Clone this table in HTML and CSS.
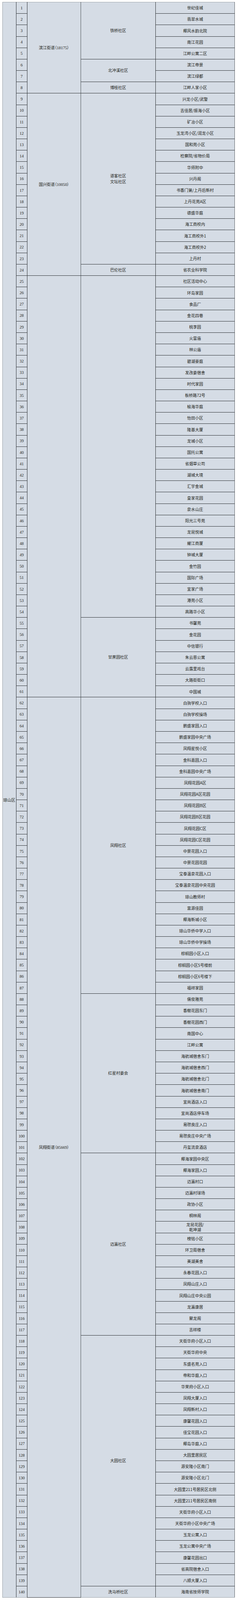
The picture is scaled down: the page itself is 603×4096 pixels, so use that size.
FILE: index.html
```html
<!DOCTYPE html>
<html lang="zh-CN">
<head>
<meta charset="utf-8">
<title>琼山区 点位表</title>
<link rel="stylesheet" href="styles.css">
</head>
<body>
<table class="sheet">
<colgroup>
<col class="c-dist"><col class="c-num"><col class="c-street"><col class="c-comm"><col class="c-loc">
</colgroup>
<tbody>
<tr class="first"><td class="dist" rowspan="140">琼山区</td><td class="num">1</td><td class="street" rowspan="8">滨江街道（<span class="n">18175</span>）</td><td class="comm" rowspan="5">铁桥社区</td><td class="loc">世纪佳城</td></tr>
<tr><td class="num">2</td><td class="loc">翡翠水城</td></tr>
<tr><td class="num">3</td><td class="loc">椰风水韵北院</td></tr>
<tr><td class="num">4</td><td class="loc">南江花园</td></tr>
<tr><td class="num">5</td><td class="loc">江畔公寓二区</td></tr>
<tr><td class="num">6</td><td class="comm" rowspan="2">北冲溪社区</td><td class="loc">滨江帝景</td></tr>
<tr><td class="num">7</td><td class="loc">滨江绿都</td></tr>
<tr><td class="num">8</td><td class="comm">博桂社区</td><td class="loc">江畔人家小区</td></tr>
<tr><td class="num">9</td><td class="street" rowspan="16">国兴街道（<span class="n">10050</span>）</td><td class="comm" rowspan="15">道客社区<br>文坛社区</td><td class="loc">兴龙小区/武警</td></tr>
<tr><td class="num">10</td><td class="loc">吉佳居/振海小区</td></tr>
<tr><td class="num">11</td><td class="loc">矿冶小区</td></tr>
<tr><td class="num">12</td><td class="loc">玉龙湾小区/润龙小区</td></tr>
<tr><td class="num">13</td><td class="loc">国和苑小区</td></tr>
<tr><td class="num">14</td><td class="loc">检察院/省物价局</td></tr>
<tr><td class="num">15</td><td class="loc">华师附中</td></tr>
<tr><td class="num">16</td><td class="loc">兴丹阁</td></tr>
<tr><td class="num">17</td><td class="loc">书香门第/上丹后新村</td></tr>
<tr><td class="num">18</td><td class="loc">上丹花苑A区</td></tr>
<tr><td class="num">19</td><td class="loc">德盛华庭</td></tr>
<tr><td class="num">20</td><td class="loc">海工商校内</td></tr>
<tr><td class="num">21</td><td class="loc">海工商校外1</td></tr>
<tr><td class="num">22</td><td class="loc">海工商校外2</td></tr>
<tr><td class="num">23</td><td class="loc">上丹村</td></tr>
<tr><td class="num">24</td><td class="comm">巴伦社区</td><td class="loc">省农业科学院</td></tr>
<tr><td class="num">25</td><td class="street" rowspan="37"></td><td class="comm" rowspan="30"></td><td class="loc">社区活动中心</td></tr>
<tr><td class="num">26</td><td class="loc">环岛家园</td></tr>
<tr><td class="num">27</td><td class="loc">食品厂</td></tr>
<tr><td class="num">28</td><td class="loc">金花四巷</td></tr>
<tr><td class="num">29</td><td class="loc">桃李园</td></tr>
<tr><td class="num">30</td><td class="loc">火雷庙</td></tr>
<tr><td class="num">31</td><td class="loc">林公庙</td></tr>
<tr><td class="num">32</td><td class="loc">碧湖豪庭</td></tr>
<tr><td class="num">33</td><td class="loc">发改委宿舍</td></tr>
<tr><td class="num">34</td><td class="loc">时代家园</td></tr>
<tr><td class="num">35</td><td class="loc">板桥路72号</td></tr>
<tr><td class="num">36</td><td class="loc">榆海华庭</td></tr>
<tr><td class="num">37</td><td class="loc">怡田小区</td></tr>
<tr><td class="num">38</td><td class="loc">隆基大厦</td></tr>
<tr><td class="num">39</td><td class="loc">龙城小区</td></tr>
<tr><td class="num">40</td><td class="loc">国托公寓</td></tr>
<tr><td class="num">41</td><td class="loc">省烟草公司</td></tr>
<tr><td class="num">42</td><td class="loc">湖城大境</td></tr>
<tr><td class="num">43</td><td class="loc">汇宇金城</td></tr>
<tr><td class="num">44</td><td class="loc">皇家花园</td></tr>
<tr><td class="num">45</td><td class="loc">泉水山庄</td></tr>
<tr><td class="num">46</td><td class="loc">阳光三号苑</td></tr>
<tr><td class="num">47</td><td class="loc">龙昆悦城</td></tr>
<tr><td class="num">48</td><td class="loc">耀江商厦</td></tr>
<tr><td class="num">49</td><td class="loc">钟城大厦</td></tr>
<tr><td class="num">50</td><td class="loc">金竹园</td></tr>
<tr><td class="num">51</td><td class="loc">国际广场</td></tr>
<tr><td class="num">52</td><td class="loc">宜家广场</td></tr>
<tr><td class="num">53</td><td class="loc">港苑小区</td></tr>
<tr><td class="num">54</td><td class="loc">高路华小区</td></tr>
<tr><td class="num">55</td><td class="comm" rowspan="7">甘蔗园社区</td><td class="loc">书馨苑</td></tr>
<tr><td class="num">56</td><td class="loc">金花园</td></tr>
<tr><td class="num">57</td><td class="loc">中信银行</td></tr>
<tr><td class="num">58</td><td class="loc">朱云恩公寓</td></tr>
<tr><td class="num">59</td><td class="loc">云露里戏台</td></tr>
<tr><td class="num">60</td><td class="loc">大路街街口</td></tr>
<tr><td class="num">61</td><td class="loc">中国城</td></tr>
<tr><td class="num">62</td><td class="street" rowspan="79">凤翔街道（<span class="n">85669</span>）</td><td class="comm" rowspan="26">凤翔社区</td><td class="loc">白驹学校入口</td></tr>
<tr><td class="num">63</td><td class="loc">白驹学校操场</td></tr>
<tr><td class="num">64</td><td class="loc">鹏盛家园入口</td></tr>
<tr><td class="num">65</td><td class="loc">鹏盛家园中央广场</td></tr>
<tr><td class="num">66</td><td class="loc">凤翔星悦小区</td></tr>
<tr><td class="num">67</td><td class="loc">金科嘉园入口</td></tr>
<tr><td class="num">68</td><td class="loc">金科嘉园中央广场</td></tr>
<tr><td class="num">69</td><td class="loc">凤翔花园A区</td></tr>
<tr><td class="num">70</td><td class="loc">凤翔花园A区花园</td></tr>
<tr><td class="num">71</td><td class="loc">凤翔花园B区</td></tr>
<tr><td class="num">72</td><td class="loc">凤翔花园B区花园</td></tr>
<tr><td class="num">73</td><td class="loc">凤翔花园C区</td></tr>
<tr><td class="num">74</td><td class="loc">凤翔花园C区花园</td></tr>
<tr><td class="num">75</td><td class="loc">中景花园入口</td></tr>
<tr><td class="num">76</td><td class="loc">中景花园花园</td></tr>
<tr><td class="num">77</td><td class="loc">宝泰温泉花园入口</td></tr>
<tr><td class="num">78</td><td class="loc">宝泰温泉花园中央花园</td></tr>
<tr><td class="num">79</td><td class="loc">琼山教师村</td></tr>
<tr><td class="num">80</td><td class="loc">富源佳园</td></tr>
<tr><td class="num">81</td><td class="loc">椰海新城小区</td></tr>
<tr><td class="num">82</td><td class="loc">琼山华侨中学入口</td></tr>
<tr><td class="num">83</td><td class="loc">琼山华侨中学操场</td></tr>
<tr><td class="num">84</td><td class="loc">棕榈园小区入口</td></tr>
<tr><td class="num">85</td><td class="loc">棕榈园小区5号楼前</td></tr>
<tr><td class="num">86</td><td class="loc">棕榈园小区6号楼下</td></tr>
<tr><td class="num">87</td><td class="loc">福祥家园</td></tr>
<tr><td class="num">88</td><td class="comm" rowspan="14">红星村委会</td><td class="loc">儒俊雅苑</td></tr>
<tr><td class="num">89</td><td class="loc">香榭花园东门</td></tr>
<tr><td class="num">90</td><td class="loc">香榭花园西门</td></tr>
<tr><td class="num">91</td><td class="loc">南国中心</td></tr>
<tr><td class="num">92</td><td class="loc">江畔公寓</td></tr>
<tr><td class="num">93</td><td class="loc">海航城宿舍东门</td></tr>
<tr><td class="num">94</td><td class="loc">海航城宿舍西门</td></tr>
<tr><td class="num">95</td><td class="loc">海航城宿舍北门</td></tr>
<tr><td class="num">96</td><td class="loc">海航城宿舍南门</td></tr>
<tr><td class="num">97</td><td class="loc">宜尚酒店入口</td></tr>
<tr><td class="num">98</td><td class="loc">宜尚酒店停车场</td></tr>
<tr><td class="num">99</td><td class="loc">易瓒良庄入口</td></tr>
<tr><td class="num">100</td><td class="loc">易瓒良庄中央广场</td></tr>
<tr><td class="num">101</td><td class="loc">丹玺流泉酒店</td></tr>
<tr><td class="num">102</td><td class="comm" rowspan="16">迈瀛社区</td><td class="loc">椰海家园中央区</td></tr>
<tr><td class="num">103</td><td class="loc">椰海家园入口</td></tr>
<tr><td class="num">104</td><td class="loc">迈瀛村口</td></tr>
<tr><td class="num">105</td><td class="loc">迈瀛村球场</td></tr>
<tr><td class="num">106</td><td class="loc">政协小区</td></tr>
<tr><td class="num">107</td><td class="loc">桐林阁</td></tr>
<tr><td class="num">108</td><td class="loc">龙昆花园/<br>乾坤湖</td></tr>
<tr><td class="num">109</td><td class="loc">榜铭小区</td></tr>
<tr><td class="num">110</td><td class="loc">环卫局宿舍</td></tr>
<tr><td class="num">111</td><td class="loc">美湖美舍</td></tr>
<tr><td class="num">112</td><td class="loc">永春花园入口</td></tr>
<tr><td class="num">113</td><td class="loc">凤翔山庄入口</td></tr>
<tr><td class="num">114</td><td class="loc">凤翔山庄中央公园</td></tr>
<tr><td class="num">115</td><td class="loc">龙瀛康居</td></tr>
<tr><td class="num">116</td><td class="loc">聚龙阁</td></tr>
<tr><td class="num">117</td><td class="loc">吉祥楼</td></tr>
<tr><td class="num">118</td><td class="comm" rowspan="22">大园社区</td><td class="loc">天街华府小区入口</td></tr>
<tr><td class="num">119</td><td class="loc">天街华府中央</td></tr>
<tr><td class="num">120</td><td class="loc">东盛名苑入口</td></tr>
<tr><td class="num">121</td><td class="loc">帝和华庭入口</td></tr>
<tr><td class="num">122</td><td class="loc">华荣府小区入口</td></tr>
<tr><td class="num">123</td><td class="loc">凤翔大厦入口</td></tr>
<tr><td class="num">124</td><td class="loc">凤翔新村入口</td></tr>
<tr><td class="num">125</td><td class="loc">康馨花园入口</td></tr>
<tr><td class="num">126</td><td class="loc">佳宝花园入口</td></tr>
<tr><td class="num">127</td><td class="loc">椰岛华庭入口</td></tr>
<tr><td class="num">128</td><td class="loc">大园里居民区</td></tr>
<tr><td class="num">129</td><td class="loc">源安隆小区南门</td></tr>
<tr><td class="num">130</td><td class="loc">源安隆小区北门</td></tr>
<tr><td class="num">131</td><td class="loc">大园里211号居民区北侧</td></tr>
<tr><td class="num">132</td><td class="loc">大园里211号居民区南侧</td></tr>
<tr><td class="num">133</td><td class="loc">天街华府小区入口</td></tr>
<tr><td class="num">134</td><td class="loc">天街华府小区中央广场</td></tr>
<tr><td class="num">135</td><td class="loc">玉龙公寓入口</td></tr>
<tr><td class="num">136</td><td class="loc">玉龙公寓中央广场</td></tr>
<tr><td class="num">137</td><td class="loc">康馨花园出口</td></tr>
<tr><td class="num">138</td><td class="loc">省高院宿舍入口</td></tr>
<tr><td class="num">139</td><td class="loc">八顺大厦入口</td></tr>
<tr class="last"><td class="num">140</td><td class="comm">洗马桥社区</td><td class="loc">海南省技师学院</td></tr>
</tbody>
</table>
</body>
</html>
```

FILE: styles.css
```css
html, body {
  margin: 0;
  padding: 0;
  background: #ffffff;
}

body {
  padding: 5px 0 0 5.6px;
  font-family: "Noto Sans CJK SC", "Noto Sans", sans-serif;
  color: #1e1f21;
}

.sheet {
  border-collapse: collapse;
  table-layout: fixed;
  width: 593.7px;
}

.c-dist { width: 35.1px; }
.c-num { width: 27.9px; }
.c-street { width: 137.3px; }
.c-comm { width: 190.8px; }
.c-loc { width: 202.6px; }

.sheet tr {
  height: 29.18px;
}

.sheet td {
  border: 1px solid #2c3034;
  background: #d5dce5;
  text-align: center;
  vertical-align: middle;
  padding: 0;
  font-size: 10.2px;
  line-height: 1.35;
  white-space: nowrap;
  overflow: hidden;
}

.sheet .dist {
  border-left-color: #9ca2a8;
  border-bottom-color: #9ca2a8;
  white-space: normal;
}

.sheet .num {
  font-family: "Liberation Serif", "Times New Roman", serif;
  font-size: 10.8px;
  letter-spacing: -0.3px;
}

.sheet .street {
  border-right-color: #4b5055;
  font-feature-settings: "halt";
}

.sheet .street .n {
  font-family: "Liberation Serif", "Times New Roman", serif;
  font-size: 10.8px;
  letter-spacing: -0.2px;
}

.sheet .comm {
  line-height: 1.45;
}

.sheet .loc {
  border-right-color: #54595e;
}

.sheet tr.first td {
  border-top-color: #9ca2a8;
}

.sheet tr.last td {
  border-bottom-color: #9ca2a8;
}
```
